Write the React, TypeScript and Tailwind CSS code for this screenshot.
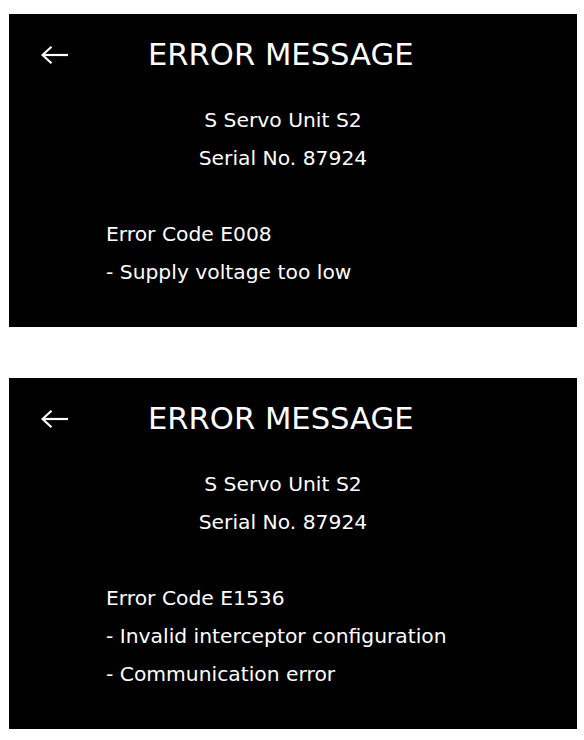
import React from "react";

type Panel = {
  unit: string;
  serial: string;
  code: string;
  messages: string[];
};

const panels: Panel[] = [
  {
    unit: "S Servo Unit S2",
    serial: "Serial No. 87924",
    code: "Error Code E008",
    messages: ["- Supply voltage too low"],
  },
  {
    unit: "S Servo Unit S2",
    serial: "Serial No. 87924",
    code: "Error Code E1536",
    messages: ["- Invalid interceptor configuration", "- Communication error"],
  },
];

const BackArrow = () => (
  <svg width="27" height="18" viewBox="0 0 27 18" fill="none">
    <path d="M1.5 9H27" stroke="white" strokeWidth="2.2" />
    <path d="M10.5 0.8L1.5 9L10.5 17.2" stroke="white" strokeWidth="2.2" />
  </svg>
);

const ErrorPanel = (props: Panel) => {
  return (
    <div className="w-[568px] bg-black text-white pt-[23px] pb-9">
      <div className="flex items-center h-[36px] pl-[32px]">
        <BackArrow />
        <h1 className="ml-[80px] text-[30.6px] leading-[36px] font-normal">ERROR MESSAGE</h1>
      </div>
      <div className="mt-[28px] pr-[20px] text-center text-[20.3px] leading-[38px]">
        <p>{props.unit}</p>
        <p>{props.serial}</p>
      </div>
      <div className="mt-[38px] pl-[97px] text-[20.3px] leading-[38px]">
        <p>{props.code}</p>
        {props.messages.map((m) => (
          <p key={m}>{m}</p>
        ))}
      </div>
    </div>
  );
};

export default function App() {
  return (
    <div
      className="w-[584px] min-h-[740px] bg-white pt-[14px] pl-[9px] flex flex-col gap-[51px]"
      style={{ fontFamily: '"DejaVu Sans", Verdana, sans-serif' }}
    >
      {panels.map((p) => (
        <ErrorPanel key={p.code} {...p} />
      ))}
    </div>
  );
}
